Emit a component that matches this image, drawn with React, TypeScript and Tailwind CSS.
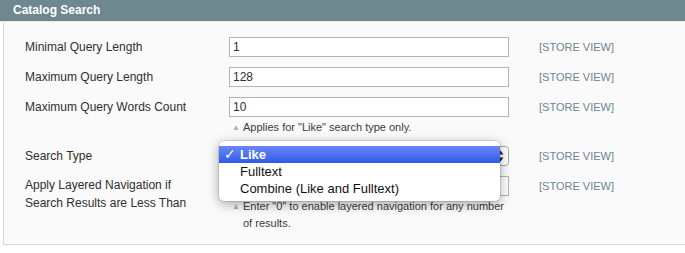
import React from "react"

const labelCls = "w-[204px] shrink-0 text-[12px] leading-[18px] pt-[1px] text-[#2f2f2f]"
const inputCls = "w-[280px] h-[20px] border border-[#b3b3b3] bg-white px-[3px] text-[12px] leading-[18px] text-[#2f2f2f]"
const scopeCls = "ml-[30px] text-[11px] leading-[18px] pt-[1px] text-[#6e8594]"

function Note({ children }: { children: React.ReactNode }) {
  return (
    <div className="flex mt-[2px] text-[11px] leading-[17px] text-[#3a3a3a]">
      <span className="w-[14px] shrink-0 pl-[3px] text-[8px] text-[#a9b1b5]">▲</span>
      <span className="flex-1">{children}</span>
    </div>
  )
}

function TextRow({ label, value, note }: { label: string; value: string; note?: string }) {
  return (
    <div className="flex items-start mb-[10px]">
      <div className={labelCls}>{label}</div>
      <div className="w-[280px] shrink-0">
        <div className={inputCls}>{value}</div>
        {note && <Note>{note}</Note>}
      </div>
      <div className={scopeCls}>[STORE VIEW]</div>
    </div>
  )
}

export default function App() {
  return (
    <div className="w-[685px] h-[253px] bg-white overflow-hidden relative font-['Liberation_Sans',Arial,sans-serif]">
      <div className="h-[21px] bg-[#6f878f] pl-[13px] text-white font-bold text-[12px] leading-[21px]">
        Catalog Search
      </div>
      <div className="h-px bg-[#e4e9eb]" />
      <div className="ml-[3px] h-[223px] border-l border-b border-[#d6d6d6] bg-[#fafafa] pt-[15px] pl-[21px]">
        <TextRow label="Minimal Query Length" value="1" />
        <TextRow label="Maximum Query Length" value="128" />
        <TextRow label="Maximum Query Words Count" value="10" note={'Applies for "Like" search type only.'} />

        <div className="flex items-start mb-[10px]">
          <div className={labelCls}>Search Type</div>
          <div className="w-[280px] h-[20px] shrink-0 relative rounded-[4px] border border-[#a8a8a8] bg-white">
            <svg className="absolute right-[4px] top-[3px]" width="7" height="12" viewBox="0 0 7 12">
              <path d="M3.5 0.5 L6.5 4.5 L0.5 4.5 Z" fill="#222" />
              <path d="M3.5 11.5 L6.5 7.5 L0.5 7.5 Z" fill="#222" />
            </svg>
          </div>
          <div className={scopeCls}>[STORE VIEW]</div>
        </div>

        <div className="flex items-start">
          <div className="w-[204px] shrink-0 text-[12px] leading-[18px] text-[#2f2f2f]">
            Apply Layered Navigation if
            <br />
            Search Results are Less Than
          </div>
          <div className="w-[280px] shrink-0">
            <div className={inputCls}></div>
            <Note>Enter "0" to enable layered navigation for any number of results.</Note>
          </div>
          <div className={scopeCls}>[STORE VIEW]</div>
        </div>
      </div>

      {/* native select popup, open */}
      <div className="absolute left-[219px] top-[141px] w-[281px] h-[60px] rounded-[5px] bg-white pt-[5px] shadow-[0_3px_12px_rgba(0,0,0,0.35)] ring-1 ring-[#0000001a] text-[13px] leading-[17px] text-[#111]">
        <div className="relative h-[17px] pl-[21px] text-white font-bold bg-gradient-to-b from-[#6b87f7] to-[#2f5ae8]">
          <span className="absolute left-[5px] top-0 font-['DejaVu_Sans',sans-serif] text-[14px] font-bold">✓</span>
          Like
        </div>
        <div className="h-[17px] pl-[21px]">Fulltext</div>
        <div className="h-[17px] pl-[21px]">Combine (Like and Fulltext)</div>
      </div>
    </div>
  )
}
